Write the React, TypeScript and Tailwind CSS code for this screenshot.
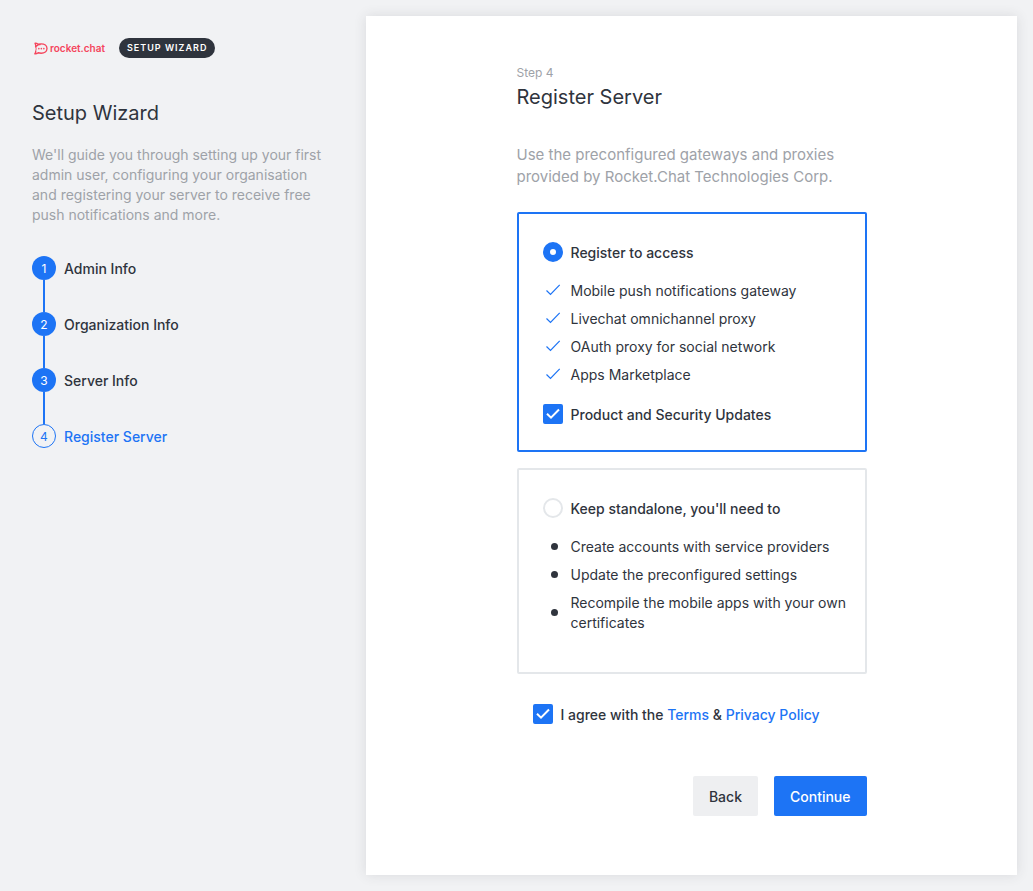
import { useState } from "react";

const steps = ["Admin Info", "Organization Info", "Server Info", "Register Server"];
const benefits = [
  "Mobile push notifications gateway",
  "Livechat omnichannel proxy",
  "OAuth proxy for social network",
  "Apps Marketplace",
];
const chores = [
  "Create accounts with service providers",
  "Update the preconfigured settings",
  "Recompile the mobile apps with your own certificates",
];

function Logo() {
  return (
    <div className="flex items-center gap-[2px] text-[#f5455c]">
      <svg viewBox="0 0 28 26" className="h-[13px] w-[14px]" fill="none" aria-hidden="true">
        <path
          d="M1.500 2.200c2.600-.3 5 .7 6.800 2.300 1.900-.6 3.900-.9 6-.9 6.600 0 11.700 4 11.700 9.400s-5.100 9.400-11.700 9.400c-2.100 0-4.100-.3-6-.9-1.800 1.600-4.200 2.600-6.800 2.300 1.800-2 2.500-4.300 1.900-6.600M1.500 2.200C3.500 4.800 4 7.500 3.200 9.500c3-3.300 6.300-5 11-5"
          stroke="currentColor"
          strokeWidth="2.700"
          strokeLinejoin="round"
        />
        <path d="M3.400 17.200C4.500 15.500 4.500 11 3.200 9.500" stroke="currentColor" strokeWidth="2" />
        <circle cx="9.700" cy="13.300" r="1.600" fill="currentColor" />
        <circle cx="14.700" cy="13.300" r="1.600" fill="currentColor" />
        <circle cx="19.700" cy="13.300" r="1.600" fill="currentColor" />
      </svg>
      <span className="pb-px text-[10px] leading-3 font-semibold">rocket.chat</span>
    </div>
  );
}

function Tick({ id, checked, onChange }: { id: string; checked: boolean; onChange: (v: boolean) => void }) {
  return (
    <span className="grid size-5 shrink-0">
      <input
        id={id}
        type="checkbox"
        checked={checked}
        onChange={(e) => onChange(e.target.checked)}
        className="peer col-start-1 row-start-1 size-5 appearance-none rounded-[2px] border-2 border-[#e4e7ea] checked:border-[#1d74f5] checked:bg-[#1d74f5]"
      />
      <svg
        viewBox="0 0 20 20"
        className="pointer-events-none col-start-1 row-start-1 size-5 opacity-0 peer-checked:opacity-100"
        fill="none"
        stroke="white"
        strokeWidth="2"
        aria-hidden="true"
      >
        <path d="M4 9.700 8 13.700 16 5.500" />
      </svg>
    </span>
  );
}

function Choice({ value, mode, setMode, children }: { value: string; mode: string; setMode: (v: string) => void; children: string }) {
  return (
    <label className="flex gap-2 font-medium">
      <input
        type="radio"
        name="mode"
        value={value}
        checked={mode === value}
        onChange={() => setMode(value)}
        className="size-5 shrink-0 appearance-none rounded-full border-2 border-[#e4e7ea] bg-white checked:border-[7px] checked:border-[#1d74f5]"
      />
      <span className="pt-px">{children}</span>
    </label>
  );
}

export default function App() {
  const [mode, setMode] = useState("register");
  const [updates, setUpdates] = useState(true);
  const [agree, setAgree] = useState(true);
  const border = (value: string) => (mode === value ? "border-[#1d74f5]" : "border-[#e4e7ea]");

  return (
    <div className="flex min-h-screen bg-[#f1f2f4] font-[Inter,sans-serif] text-sm leading-5 text-[#2f343d]">
      <aside className="w-[366px] shrink-0 px-8 pt-[38px]">
        <header className="flex items-center gap-[14px] pl-[2px]">
          <Logo />
          <span className="rounded-full bg-[#2f343d] px-2 text-[9px] leading-5 font-semibold tracking-[1px] text-white">
            SETUP WIZARD
          </span>
        </header>
        <h2 className="mt-[39px] text-xl leading-8">Setup Wizard</h2>
        <p className="mt-4 text-[#9ea2a8]">
          We'll guide you through setting up your first admin user, configuring your organisation and registering your
          server to receive free push notifications and more.
        </p>
        <ol className="mt-[31px]">
          {steps.map((step, i) => {
            const current = i === steps.length - 1;
            return (
              <li key={step} className={current ? "flex gap-2 text-[#1d74f5]" : "flex gap-2"}>
                <div className="flex flex-col items-center">
                  <span
                    className={
                      current
                        ? "flex size-6 items-center justify-center rounded-full border border-[#1d74f5] pt-px text-xs"
                        : "flex size-6 items-center justify-center rounded-full bg-[#1d74f5] pt-px text-xs text-white"
                    }
                  >
                    {i + 1}
                  </span>
                  {!current && <span className="h-8 w-[2px] bg-[#1d74f5]" />}
                </div>
                <span className="pt-[3px] font-medium">{step}</span>
              </li>
            );
          })}
        </ol>
      </aside>

      <main className="my-4 mr-4 flex flex-1 justify-center bg-white px-4 py-12 shadow-[0_0_12px_rgba(47,52,61,0.12)]">
        <form className="w-full max-w-[350px]" onSubmit={(e) => e.preventDefault()}>
          <p className="pt-px text-xs leading-4 text-[#9ea2a8]">Step 4</p>
          <h1 className="text-xl leading-8">Register Server</h1>
          <p className="mt-[31px] text-[15px] leading-[22px] text-[#9ea2a8]">
            Use the preconfigured gateways and proxies provided by Rocket.Chat Technologies Corp.
          </p>

          <section className={`mt-6 rounded-[2px] border-2 px-6 pt-7 pb-[25px] ${border("register")}`}>
            <Choice value="register" mode={mode} setMode={setMode}>Register to access</Choice>
            <ul className="mt-[17px] mb-[19px] space-y-[7px]">
              {benefits.map((b) => (
                <li key={b} className="flex gap-2">
                  <svg viewBox="0 0 20 20" className="size-5 shrink-0" fill="none" stroke="#1d74f5" strokeWidth="1.200" aria-hidden="true">
                    <path d="M3.500 10.500 7.500 14.500 16.700 4.800" />
                  </svg>
                  <span className="pt-px">{b}</span>
                </li>
              ))}
            </ul>
            <div className="flex gap-2 font-medium">
              <Tick id="updates" checked={updates} onChange={setUpdates} />
              <label htmlFor="updates" className="pt-px">Product and Security Updates</label>
            </div>
          </section>

          <section className={`mt-4 rounded-[2px] border-2 pt-7 pr-3 pb-[39px] pl-6 ${border("standalone")}`}>
            <Choice value="standalone" mode={mode} setMode={setMode}>Keep standalone, you'll need to</Choice>
            <ul className="mt-[17px] space-y-[7px]">
              {chores.map((c) => (
                <li key={c} className="flex items-center gap-2">
                  <span className="flex w-5 shrink-0 justify-end pr-[5px]">
                    <span className="mb-px size-[7px] rounded-full bg-[#2f343d]" />
                  </span>
                  <span className="pt-px">{c}</span>
                </li>
              ))}
            </ul>
          </section>

          <div className="mt-[30px] flex gap-2 px-4 font-medium">
            <Tick id="agree" checked={agree} onChange={setAgree} />
            <label htmlFor="agree" className="pt-px">
              I agree with the <a href="#terms" className="text-[#1d74f5]">Terms</a> &amp;{" "}
              <a href="#privacy" className="text-[#1d74f5]">Privacy Policy</a>
            </label>
          </div>

          <div className="mt-[51px] flex justify-end gap-4 font-medium">
            <button type="button" className="h-10 rounded-[2px] bg-[#eeeff1] px-4 pt-px">Back</button>
            <button type="submit" className="h-10 rounded-[2px] bg-[#1d74f5] px-4 pt-px text-white">Continue</button>
          </div>
        </form>
      </main>
    </div>
  );
}
